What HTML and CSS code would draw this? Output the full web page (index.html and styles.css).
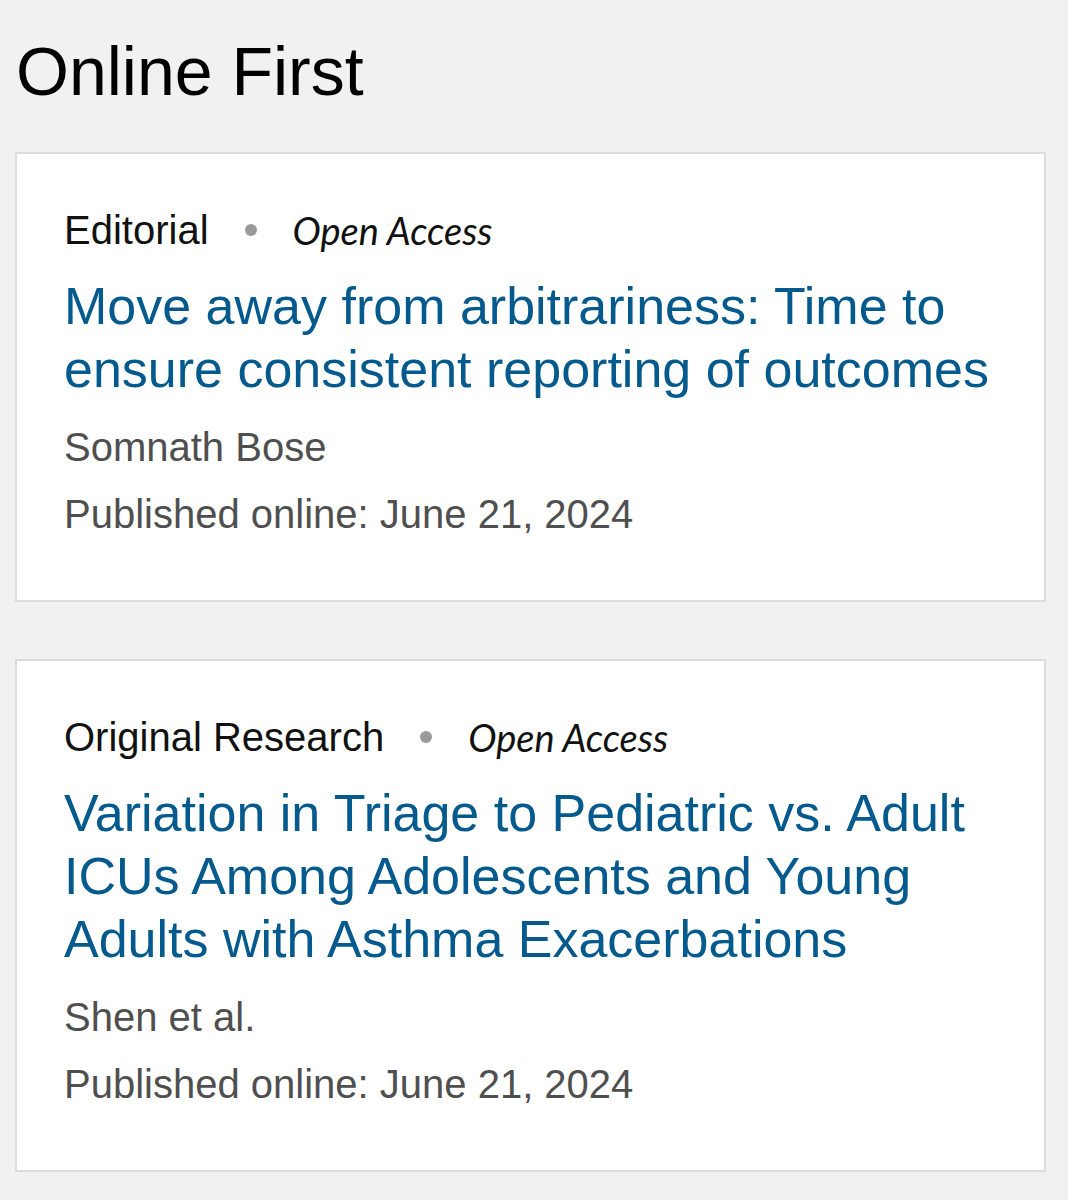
FILE: index.html
```html
<!DOCTYPE html>
<html lang="en">

<head>
    <meta charset="UTF-8">
    <meta name="viewport" content="width=device-width, initial-scale=1.0">
    <title>Online First</title>
    <link rel="stylesheet" href="styles.css">
</head>

<body>
    <div class="page">
        <h1>Online First</h1>

        <div class="article-card">
            <div class="article-meta">
                <span class="article-type">Editorial</span>
                <span class="meta-dot"></span>
                <span class="open-access">Open Access</span>
            </div>
            <a href="#" class="article-title">Move away from arbitrariness: Time to ensure consistent reporting of outcomes</a>
            <div class="article-authors">Somnath Bose</div>
            <div class="article-date">Published online: June 21, 2024</div>
        </div>

        <div class="article-card">
            <div class="article-meta">
                <span class="article-type">Original Research</span>
                <span class="meta-dot"></span>
                <span class="open-access">Open Access</span>
            </div>
            <a href="#" class="article-title">Variation in Triage to Pediatric vs. Adult ICUs Among Adolescents and Young Adults with Asthma Exacerbations</a>
            <div class="article-authors">Shen et al.</div>
            <div class="article-date">Published online: June 21, 2024</div>
        </div>
    </div>
</body>

</html>
```

FILE: styles.css
```css
body {
    font-family: "Liberation Sans", Arial, sans-serif;
    margin: 0;
    background-color: #f1f1f1;
}

.page {
    padding: 31px 22px 30px 15px;
}

h1 {
    font-size: 68px;
    font-weight: normal;
    line-height: 80px;
    color: #000;
    margin: 0 0 41px 1px;
}

.article-card {
    background-color: white;
    border: 2px solid #dcdcdc;
    padding: 52px 40px 62px 47px;
    margin-bottom: 57px;
}

.article-meta {
    display: flex;
    align-items: center;
    gap: 36px;
    font-size: 40px;
    line-height: 48px;
    color: #111;
}

.meta-dot {
    width: 12px;
    height: 12px;
    border-radius: 50%;
    background-color: #9a9a9a;
}

.open-access {
    font-family: Lato, "Open Sans", sans-serif;
    font-style: italic;
    font-size: 38px;
}

.article-title {
    display: block;
    margin: 21px 0 22px;
    font-size: 52px;
    line-height: 63px;
    color: #04598d;
    text-decoration: none;
}

.article-authors,
.article-date {
    font-size: 40px;
    line-height: 48px;
    color: #4f4f4f;
}

.article-date {
    margin-top: 19px;
}
```
